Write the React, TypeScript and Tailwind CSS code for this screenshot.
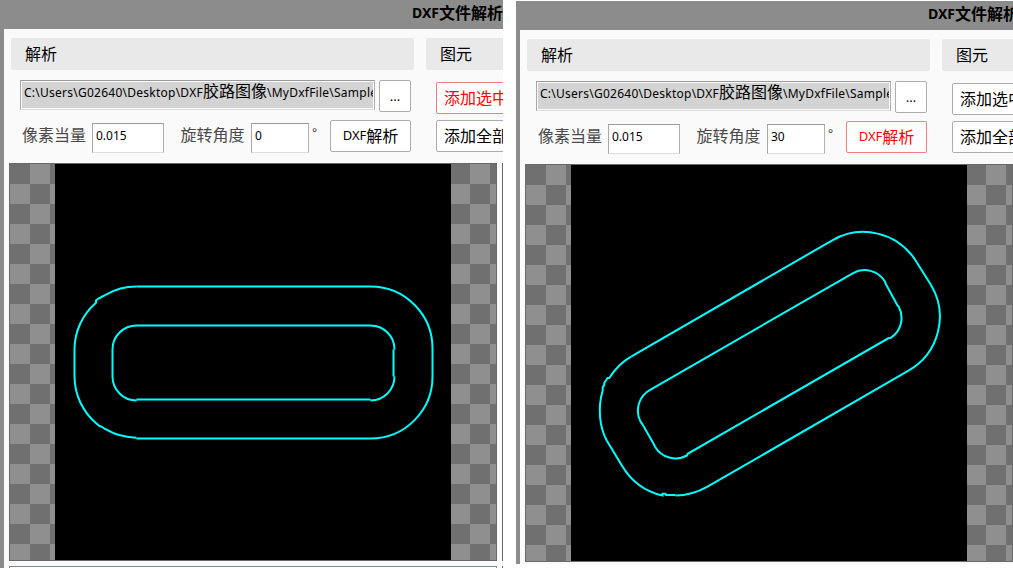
import type { ReactNode } from "react";

const INPUT =
  "h-[30px] overflow-hidden whitespace-nowrap border border-[#dcdcdc] border-t-[#9a9a9a] border-l-[#a8a8a8] border-r-[#b0b0b0] text-[12px] text-black";

function Button({ children, active = false, className = "" }: { children: ReactNode; active?: boolean; className?: string }) {
  return (
    <button
      className={`flex h-8 shrink-0 items-center rounded-[2px] border bg-white whitespace-nowrap text-[16px] leading-none ${
        active ? "border-[#f08080] text-[#ff0000]" : "border-[#adadad] text-black"
      } ${className}`}
    >
      {children}
    </button>
  );
}

function GroupTitle({ children, className = "" }: { children: ReactNode; className?: string }) {
  return (
    <div className={`flex h-8 shrink-0 items-center rounded-[2px] bg-[#e9e9e9] pl-[14px] text-[16px] leading-none text-black ${className}`}>
      {children}
    </div>
  );
}

type PanelProps = {
  angle: string;
  activeButton: "add" | "parse";
  className: string;
  split: boolean;
  children: ReactNode;
};

function ParserWindow({ angle, activeButton, className, split, children }: PanelProps) {
  return (
    <section className={`flex shrink-0 flex-col overflow-hidden border-l-4 border-[#8c8c8c] bg-[#fafafa] ${className}`}>
      <header className="flex h-[29px] shrink-0 items-center bg-[#8c8c8c] pb-[3px] pl-[408px] text-[16px] leading-none font-bold whitespace-nowrap text-black">
        <span className="text-[14px]">DXF</span>文件解析
      </header>

      <div className="flex h-[134px] shrink-0 pt-[9px] pl-[7px]">
        <div className="w-[403px] shrink-0">
          <GroupTitle>解析</GroupTitle>
          <div className="mt-[10px] flex h-8 gap-1 pl-[9px]">
            <div className={`${INPUT} flex w-[355px] shrink-0 bg-[#fafafa] p-px`}>
              <div className="h-[26px] w-full overflow-hidden bg-[#d3d3d3] pl-[2px] leading-[18px] tracking-[0.25px]">
                C:\Users\G02640\Desktop\DXF<span className="text-[16px] tracking-normal">胶路图像</span>\MyDxfFile\Sample
              </div>
            </div>
            <Button className="w-8 justify-center text-[13px]!">...</Button>
          </div>
          <div className="mt-2 flex h-[33px] items-start pl-[11px] text-[16px] leading-[31px] whitespace-nowrap text-[#4a4a4a]">
            <span className="w-[70px]">像素当量</span>
            <div className={`${INPUT} mt-[3px] w-[72px] bg-white pl-[3px] leading-[23px]`}>0.015</div>
            <span className="ml-[16.5px] w-[70.5px]">旋转角度</span>
            <div className={`${INPUT} mt-[3px] w-[58px] bg-white pl-[3px] leading-[23px]`}>{angle}</div>
            <span className="ml-[3px] w-[18px] text-[12px] leading-[26px]">°</span>
            <Button active={activeButton === "parse"} className="w-[81px] justify-center pb-px">
              <span className="text-[13px]">DXF</span>解析
            </Button>
          </div>
        </div>
        <div className="ml-3 w-[200px] shrink-0">
          <GroupTitle>图元</GroupTitle>
          <div className="mt-3 flex flex-col gap-[6px] pl-[10px]">
            <Button active={activeButton === "add"} className="w-[100px] pl-[7px]">添加选中项</Button>
            <Button className="w-[100px] pl-[7px]">添加全部项</Button>
          </div>
        </div>
      </div>

      <div className="flex h-[398px] shrink-0 gap-[5px] pl-[5px]">
        <div className="flex w-[488px] shrink-0 border border-[#696969] bg-[conic-gradient(#8f8f8f_25%,#707070_0_50%,#8f8f8f_0_75%,#707070_0)] bg-[length:40px_40px] pl-[45px]">
          <div className="h-[396px] w-[396px] bg-black">{children}</div>
        </div>
        {split && <div className="w-10 shrink-0 border-l border-[#696969]" />}
      </div>
      {split && (
        <div className="mt-[5px] flex h-2 shrink-0 gap-[5px] pl-[5px]">
          <div className="w-[488px] shrink-0 border border-[#828790] bg-white" />
          <div className="w-10 shrink-0 border-l border-[#696969]" />
        </div>
      )}
    </section>
  );
}

function LevelContour() {
  return (
    <svg viewBox="55 164 396 396" className="block h-[396px] w-[396px]" fill="none" stroke="#00ffff" strokeWidth="2">
      <path d="M136.5 286.5H370.5A62 62 0 0 1 432.5 349.5V376.5A62 62 0 0 1 370.5 438.5H136.5" />
      <path d="M136.5 437.7A62 62 0 0 1 105.5 429.2L103.5 428L102 426.8L99.5 426L97 424A62 62 0 0 1 74.5 376.5V349.5A62 62 0 0 1 96 302.7L96 300.5L98.5 298.5L101.5 297L105.5 294.8A62 62 0 0 1 136.5 286.5" />
      <path d="M136.5 325.5H370.5A24 24 0 0 1 394.5 349.5M393.5 349.5V376.5M394.5 376.5A24 24 0 0 1 370.5 400.5M370.5 399.5H136.5M136.5 400.5A24 24 0 0 1 112.5 376.5V349.5A24 24 0 0 1 136.5 325.5" />
    </svg>
  );
}

function RotatedContour() {
  return (
    <svg viewBox="571 165 396 396" className="block h-[396px] w-[396px]" fill="none" stroke="#00ffff" strokeWidth="2">
      <path d="M631.5 356.3L832.3 240.3A62 62 0 0 1 915.3 260L931 285A62 62 0 0 1 908.5 370.7L707.5 486.7Q692 495.5 675.5 495.5" />
      <path d="M675.5 494.9H666L665.5 493.8H662.5V495.5C645 491.5 631 481 621.7 465.2L606.7 440.5C599.5 427 597.5 408 602.7 390.5V387L604 385.5L604.5 382.5L606 380.5L607.5 378H609.3C614.5 369.5 621.5 362 631.5 356.3" />
      <path d="M651 389.3L852.7 273.3A24 24 0 0 1 885 281.5L885.5 283.5L897.5 305.5L898.5 306.2A24 24 0 0 1 891 337.7L888.3 338.3L687.7 453.8L687 455.5A24 24 0 0 1 655 446.7L654.3 445L642.3 424L641 422.5A24 24 0 0 1 651 389.3" />
    </svg>
  );
}

export default function App() {
  return (
    <main className="flex h-[568px] w-[1013px] items-start gap-[13px] overflow-hidden bg-white font-['Noto_Sans','Noto_Sans_CJK_SC',sans-serif]">
      <ParserWindow angle="0" activeButton="add" split className="h-[568px] w-[503px]">
        <LevelContour />
      </ParserWindow>
      <ParserWindow angle="30" activeButton="parse" split={false} className="mt-px h-[563px] w-[497px]">
        <RotatedContour />
      </ParserWindow>
    </main>
  );
}
